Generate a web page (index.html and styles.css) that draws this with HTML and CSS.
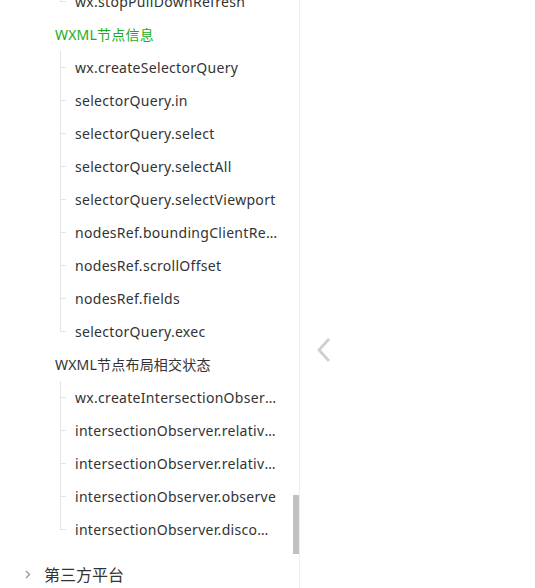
FILE: index.html
```html
<!DOCTYPE html>
<html lang="zh-CN">
<head>
    <meta charset="UTF-8">
    <meta name="viewport" content="width=device-width, initial-scale=1.0">
    <title>API 目录</title>
    <link rel="stylesheet" href="styles.css">
</head>
<body>
    <div class="layout">
        <aside class="sidebar">
            <div class="menu">
                <ul class="sub-list">
                    <li class="sub-item"><span>wx.stopPullDownRefresh</span></li>
                </ul>

                <div class="group-title active">WXML节点信息</div>
                <ul class="sub-list">
                    <li class="sub-item"><span>wx.createSelectorQuery</span></li>
                    <li class="sub-item"><span>selectorQuery.in</span></li>
                    <li class="sub-item"><span>selectorQuery.select</span></li>
                    <li class="sub-item"><span>selectorQuery.selectAll</span></li>
                    <li class="sub-item"><span>selectorQuery.selectViewport</span></li>
                    <li class="sub-item"><span>nodesRef.boundingClientRect</span></li>
                    <li class="sub-item"><span>nodesRef.scrollOffset</span></li>
                    <li class="sub-item"><span>nodesRef.fields</span></li>
                    <li class="sub-item"><span>selectorQuery.exec</span></li>
                </ul>

                <div class="group-title">WXML节点布局相交状态</div>
                <ul class="sub-list">
                    <li class="sub-item"><span>wx.createIntersectionObserver</span></li>
                    <li class="sub-item"><span>intersectionObserver.relativeTo</span></li>
                    <li class="sub-item"><span>intersectionObserver.relativeToViewport</span></li>
                    <li class="sub-item"><span>intersectionObserver.observe</span></li>
                    <li class="sub-item"><span>intersectionObserver.disconnect</span></li>
                </ul>

                <div class="top-item">
                    <svg class="arrow" width="6" height="9" viewBox="0 0 6 9"><path d="M1 1l3.5 3.5L1 8" fill="none" stroke="#999" stroke-width="1.4"/></svg>
                    <span>第三方平台</span>
                </div>
            </div>
            <div class="scroll-thumb"></div>
        </aside>

        <main class="content">
            <button class="collapse-btn" aria-label="收起">
                <svg width="16" height="26" viewBox="0 0 16 26"><path d="M13 2L3 13l10 11" fill="none" stroke="#cfcfcf" stroke-width="2.8"/></svg>
            </button>
        </main>
    </div>
</body>
</html>
```

FILE: styles.css
```css
/* 页面基础 */
body {
    margin: 0;
    font-family: "Noto Sans", "Noto Sans CJK SC", sans-serif;
    color: #333;
    background: #fff;
}

.layout {
    display: flex;
    height: 588px;
    overflow: hidden;
}

/* 左侧目录 */
.sidebar {
    position: relative;
    width: 299px;
    flex-shrink: 0;
    border-right: 1px solid #eeeeee;
    overflow: hidden;
}

.menu { margin-top: -15px; }

.group-title {
    height: 33px;
    line-height: 33px;
    padding-left: 55px;
    font-size: 14px;
    letter-spacing: 0.2px;
    color: #333;
}
.group-title.active { color: #1aad19; }

/* 子项和树形连线 */
.sub-list {
    list-style: none;
    margin: 0;
    padding: 0 22px 0 60px;
}
.sub-item {
    position: relative;
    height: 33px;
    line-height: 33px;
    padding-left: 15px;
    font-size: 14px;
    letter-spacing: 0.3px;
}
.sub-item span {
    display: block;
    white-space: nowrap;
    overflow: hidden;
    text-overflow: ellipsis;
}
.sub-item::before {
    content: "";
    position: absolute;
    left: 0;
    top: 0;
    bottom: 0;
    border-left: 1px solid #e5e5e5;
}
.sub-item:last-child::before { bottom: 16px; }
.sub-item::after {
    content: "";
    position: absolute;
    left: 0;
    top: 16px;
    width: 6px;
    border-top: 1px solid #e5e5e5;
}

/* 一级菜单 */
.top-item {
    display: flex;
    align-items: center;
    height: 44px;
    margin-top: 6px;
    padding-left: 25px;
    font-size: 16px;
    color: #333;
}
.top-item .arrow { margin-right: 13px; }

/* 滚动条 */
.scroll-thumb {
    position: absolute;
    right: 0;
    top: 495px;
    width: 6px;
    height: 59px;
    background: #c1c1c1;
}

/* 右侧内容 */
.content {
    flex: 1;
    padding-top: 337px;
    padding-left: 16px;
}
.collapse-btn {
    border: none;
    background: none;
    padding: 0;
    cursor: pointer;
}
```
